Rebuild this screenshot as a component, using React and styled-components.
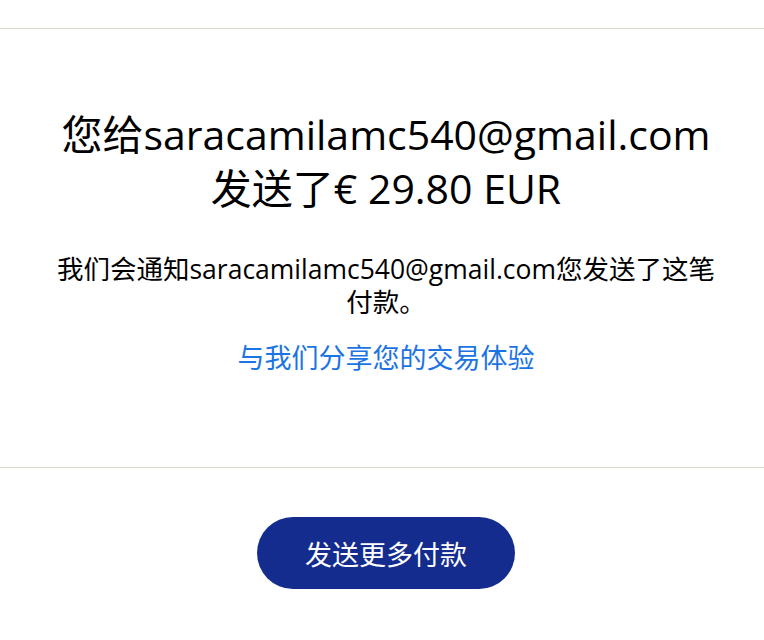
import React from "react";
import styled, { createGlobalStyle } from "styled-components";

const Global = createGlobalStyle`
  html, body { margin: 0; padding: 0; background: #fff; }
  body { font-family: "Open Sans", "Noto Sans CJK SC", sans-serif; color: #000; }
`;

const Page = styled.div`
  box-sizing: border-box;
  width: 764px;
  padding-top: 28px;
`;

const Section = styled.section`
  border-top: 1px solid #dcd9d1;
  padding: ${(p) => p.$pad};
  padding-left: 8px;
  display: flex;
  flex-direction: column;
  align-items: center;
  text-align: center;
`;

const Heading = styled.h1`
  margin: 0;
  font-size: 41px;
  font-weight: 400;
  line-height: 54px;
`;

const Body = styled.p`
  margin: 38px 0 0;
  font-size: 26.5px;
  line-height: 33px;
  max-width: 665px;
`;

const Link = styled.a`
  margin-top: 22px;
  font-size: 27px;
  line-height: 33px;
  color: #1c74e2;
  text-decoration: none;
`;

const Button = styled.button`
  width: 258px;
  height: 72px;
  border: none;
  border-radius: 36px;
  background: #142c8e;
  color: #fff;
  font-family: inherit;
  font-size: 27px;
`;

export default function App() {
  return (
    <Page>
      <Global />
      <Section $pad="78px 0 93px">
        <Heading>
          您给saracamilamc540@gmail.com
          <br />
          发送了€ 29.80 EUR
        </Heading>
        <Body>我们会通知saracamilamc540@gmail.com您发送了这笔付款。</Body>
        <Link href="#">与我们分享您的交易体验</Link>
      </Section>
      <Section $pad="49px 0 0">
        <Button>发送更多付款</Button>
      </Section>
    </Page>
  );
}
